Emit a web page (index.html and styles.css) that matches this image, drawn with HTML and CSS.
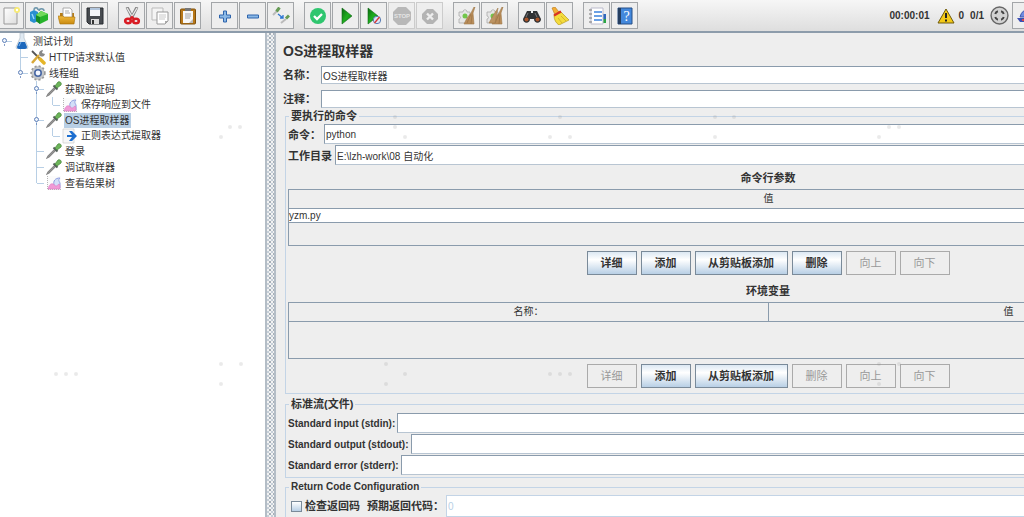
FILE: index.html
```html
<!DOCTYPE html>
<html lang="zh-CN">
<head>
<meta charset="utf-8">
<title>OS进程取样器</title>
<link rel="stylesheet" href="styles.css">
</head>
<body>
<svg class="defs" aria-hidden="true">
  <defs>
    <linearGradient id="g-green" x1="0" y1="0" x2="1" y2="1"><stop offset="0" stop-color="#0a6a10"/><stop offset=".5" stop-color="#1fae1f"/><stop offset="1" stop-color="#0b7a12"/></linearGradient>
    <linearGradient id="g-gold" x1="0" y1="0" x2="0" y2="1"><stop offset="0" stop-color="#f0b93c"/><stop offset="1" stop-color="#c98a10"/></linearGradient>
    <linearGradient id="g-page" x1="0" y1="0" x2="1" y2="1"><stop offset="0" stop-color="#fff"/><stop offset="1" stop-color="#ddd"/></linearGradient>
    <symbol id="dropper" viewBox="0 0 16 16">
      <path d="M1 15l1-2 7-7 1 1-7 7z" fill="#d5dad5" stroke="#858585" stroke-width="1.2"/>
      <path d="M7.500 4.500l4 4" stroke="#55605a" stroke-width="2"/>
      <path d="M9 5l3-4c2-1 4 1 3 3l-4 3z" fill="#6db55a" stroke="#4a8a3e" stroke-width=".8"/>
    </symbol>
    <symbol id="chart" viewBox="0 0 16 16">
      <path d="M1 1h14v14H1z" fill="#fbfbfb"/><path d="M1.500 1v13.500H15" fill="none" stroke="#b5b5b5" stroke-dasharray="1 1"/>
      <path d="M8 10c-1-4 1-7 6-7-2 2-1 3 0 5v5H8z" fill="#d3dff8" stroke="#8f9fe0" stroke-width="1"/>
      <path d="M2 14c1-4 3-6 5-5 2 0 1 2 3 2s2-2 3-2 1 3 1 5z" fill="#f09ad6" stroke="#dc78c2" stroke-width=".6"/>
    </symbol>
    <symbol id="broom" viewBox="0 0 18 18">
      <path d="M1 5h4c0-3 4-3 4 0h3v4c3 0 3 4 0 4v3H1v-4c2 0 2-3 0-3z" fill="#e6e6e6" stroke="#aaa" stroke-width=".8"/>
      <circle cx="7" cy="9" r="2.500" fill="#72c64a"/>
      <path d="M17 0l-2 6 1 11H6l3-6 4-5 3-6z" fill="#b98d5a" stroke="#a07a4c" stroke-width=".6"/>
      <path d="M13 7l-4 9m5-8l-1 9" stroke="#9a7246" stroke-width=".7"/>
    </symbol>
  </defs>
</svg>

<header class="toolbar">
  <div class="tool-group">
    <button class="tool" aria-label="新建"><svg viewBox="0 0 18 18"><path d="M2 1h13v16H2z" fill="url(#g-page)" stroke="#999"/><circle cx="15" cy="3" r="3" fill="#f7ea72"/><circle cx="15" cy="3" r="1.200" fill="#fff"/></svg></button>
    <button class="tool" aria-label="模板"><svg viewBox="0 0 18 18"><path d="M0 5l4-2 4 2v9l-4 2-4-2z" fill="#2a8fd0"/><path d="M4 3c0-3 4-3 4 0m1 1c0-3 5-3 5 0" fill="none" stroke="#6d96ab" stroke-width="1.500"/><path d="M6 8l5-4 7 3v6l-8 4-4-3z" fill="#27b32b"/><path d="M6 8l4 2v7l-4-3z" fill="#168a24"/><path d="M6 8l5-4 7 3-8 3z" fill="#72d95c"/><path d="M2 7l2 5" stroke="#9bdcff" stroke-width="1.300"/></svg></button>
    <button class="tool" aria-label="打开"><svg viewBox="0 0 18 18"><path d="M2 6h14v9H2z" fill="#b87d15"/><path d="M5 1h7l2 2v8H5z" fill="#fff" stroke="#999" stroke-width=".8"/><path d="M7 4h4M7 6h5" stroke="#aaa"/><path d="M0 9h5l1 1h11l-1 7H2z" fill="url(#g-gold)" stroke="#a8720e" stroke-width=".6"/></svg></button>
    <button class="tool" aria-label="保存"><svg viewBox="0 0 18 18"><path d="M1 1h16v16H3l-2-2z" fill="#474b50" stroke="#292c30"/><path d="M4 1h10v8H4z" fill="#f4f6f9"/><path d="M4 2h10" stroke="#6e94c0"/><path d="M5 12h8v5H5z" fill="#ddd"/><path d="M6 13h2v4H6z" fill="#333"/></svg></button>
  </div>
  <div class="tool-group">
    <button class="tool" aria-label="剪切"><svg viewBox="0 0 18 18"><path d="M4 0l6 12M14 0L8 12" stroke="#888" stroke-width="3"/><path d="M4 1l6 10M14 1L8 11" stroke="#eee" stroke-width="1.200"/><ellipse cx="5" cy="14" rx="2.800" ry="2.200" fill="none" stroke="#d91c24" stroke-width="2.600"/><ellipse cx="13" cy="14" rx="2.800" ry="2.200" fill="none" stroke="#d91c24" stroke-width="2.600"/><path d="M7 12l2-2 2 2" fill="none" stroke="#d91c24" stroke-width="2"/></svg></button>
    <button class="tool" aria-label="复制"><svg viewBox="0 0 18 18"><path d="M1 1h11v12H1z" fill="#f4f4f4" stroke="#bbb"/><path d="M6 5h11v9l-3 3H6z" fill="#fff" stroke="#999"/><path d="M8 8h7M8 10h7M8 12h6" stroke="#bbb" stroke-width=".8"/><path d="M14 17v-3h3z" fill="#aaa"/></svg></button>
    <button class="tool" aria-label="粘贴"><svg viewBox="0 0 18 18"><rect x="1.500" y="2" width="15" height="15" rx="1" fill="#b87819" stroke="#7e500c"/><path d="M4 4h10v12H4z" fill="#f8f8f8"/><path d="M6 1h6v3H6z" fill="#777"/><path d="M6 7h6M6 9h6M6 11h5" stroke="#999" stroke-width=".9"/><path d="M10 16l4-4v4z" fill="#bbb"/></svg></button>
  </div>
  <div class="tool-group">
    <button class="tool" aria-label="展开"><svg viewBox="0 0 18 18"><path d="M7.500 4h3v4h4v3h-4v4h-3v-4h-4V8h4z" fill="#8ab8e6" stroke="#2f65ad"/></svg></button>
    <button class="tool" aria-label="折叠"><svg viewBox="0 0 18 18"><path d="M3.500 8h11v3h-11z" fill="#8ab8e6" stroke="#2f65ad"/></svg></button>
    <button class="tool" aria-label="切换"><svg viewBox="0 0 18 18"><path d="M1 8l4-4M9 16l5-4" stroke="#bbb" stroke-width="2"/><path d="M4.500 4.500l3-4M14 11.500l3-3" stroke="#679b56" stroke-width="3"/><path d="M6 7l5 4m0-3v3H8" fill="none" stroke="#2c75d2" stroke-width="1.300"/></svg></button>
  </div>
  <div class="tool-group">
    <button class="tool" aria-label="已启用"><svg viewBox="0 0 18 18"><circle cx="9" cy="9" r="8" fill="#2fc66f"/><path d="M5 9l3 3 5-5" fill="none" stroke="#fff" stroke-width="2.300"/></svg></button>
    <button class="tool" aria-label="启动"><svg viewBox="0 0 18 18"><path d="M5 1l10 8-10 8z" fill="url(#g-green)" stroke="#12691a" stroke-width=".6"/></svg></button>
    <button class="tool" aria-label="不停顿启动"><svg viewBox="0 0 18 18"><path d="M3 1l10 8-10 8z" fill="url(#g-green)" stroke="#12691a" stroke-width=".6"/><circle cx="12" cy="13" r="3.700" fill="#dbe7f6" stroke="#5b7eb4"/><path d="M9.500 16l5-6" stroke="#dd3434" stroke-width="1.300"/></svg></button>
    <button class="tool" disabled aria-label="停止"><svg viewBox="0 0 18 18"><path d="M5 0h8l5 5v8l-5 5H5l-5-5V5z" fill="#b8b8b8"/><text class="stop-text" x="9" y="11" text-anchor="middle">STOP</text></svg></button>
    <button class="tool" disabled aria-label="关闭"><svg viewBox="0 0 18 18"><path d="M6 2h6l5 5v5l-5 5H6l-5-5V7z" fill="#b4b4b4"/><path d="M6 6.500l6 6M12 6.500l-6 6" stroke="#eee" stroke-width="2.400"/></svg></button>
  </div>
  <div class="tool-group">
    <button class="tool" aria-label="清除"><svg><use href="#broom"/></svg></button>
    <button class="tool" aria-label="清除全部"><svg viewBox="0 0 18 18"><use href="#broom" width="18" height="18"/><path d="M12 1L8 7l-5 9h6z" fill="#bd9463" stroke="#a07a4c" stroke-width=".6"/></svg></button>
  </div>
  <div class="tool-group">
    <button class="tool" aria-label="查找"><svg viewBox="0 0 18 18"><path d="M4 4h4v2h2V4h4l4 8c0 5-7 5-7 0H7c0 5-7 5-7 0z" fill="#303234"/><circle cx="3.500" cy="12.500" r="2" fill="#a9552b"/><circle cx="14.500" cy="12.500" r="2" fill="#a9552b"/><path d="M5 6L3 10M12 6l2 4" stroke="#777"/></svg></button>
    <button class="tool" aria-label="重置查找"><svg viewBox="0 0 18 18"><path d="M1 1l3-1 4 5-4 3z" fill="#f3ad35" stroke="#b97718" stroke-width=".6"/><path d="M3 8l6-4 9 9-10 5c-3-2-5-5-5-10z" fill="#f4dc3d" stroke="#b79b1d" stroke-width=".7"/><path d="M3 8.500l7-4" stroke="#d93224" stroke-width="2.200"/><path d="M7 11l4 5M10 9l5 5" stroke="#d6b72b"/></svg></button>
  </div>
  <div class="tool-group">
    <button class="tool" aria-label="函数助手"><svg viewBox="0 0 18 18"><path d="M12 11h6v5h-6z" fill="#2aa544"/><path d="M14 7h4v5h-4z" fill="#2e69bd"/><path d="M3 1h12v16H3z" fill="#fff" stroke="#bbc"/><path d="M6 5h8M6 9h8M6 13h8" stroke="#3c82dd" stroke-width="1.700"/><path d="M1 3h3M1 7h3M1 11h3M1 15h3" stroke="#777"/></svg></button>
    <button class="tool" aria-label="帮助"><svg viewBox="0 0 18 18"><path d="M2 1h14v16H2z" fill="#4388dc" stroke="#264f86"/><path d="M2 1h3v16H2z" fill="#263f61"/><text class="help-text" x="10.500" y="14" text-anchor="middle">?</text></svg></button>
  </div>
  <div class="status">
    <span>00:00:01</span>
    <svg class="warn" viewBox="0 0 18 16"><path d="M9 1l8 14H1z" fill="#f4ca18" stroke="#6e5a0c" stroke-linejoin="round"/><path d="M9 5v5M9 11.500v2" stroke="#222" stroke-width="2"/></svg>
    <span>0</span>
    <span class="threads">0/1</span>
    <svg class="round" viewBox="0 0 18 18"><circle cx="9" cy="9" r="8" fill="#d2d2d2" stroke="#666" stroke-width="1.300"/><path d="M5 7.500q.5-2 2.500-2.500M10.500 5q2 .5 2.500 2.500M13 10.500q-.5 2-2.500 2.500M7.500 13q-2-.5-2.500-2.500" fill="none" stroke="#444" stroke-width="1.900"/></svg>
    <button class="tool lang" aria-label="语言"><svg viewBox="0 0 18 18"><path d="M3 10q2-8 9-7l4 7z" fill="#6f8be0" stroke="#3e57b0"/><path d="M0 11h15v4H3z" fill="#3c4fb4"/><path d="M5 12h10v2H5z" fill="#d94848"/></svg></button>
  </div>
</header>

<main class="workspace">
  <nav class="tree" aria-label="测试计划">
    <ul>
      <li class="open root">
        <div class="node"><svg viewBox="0 0 16 16"><path d="M6 0h4v5l4 9q0 2-2 2H4q-2 0-2-2l4-9z" fill="#dfe9f2" stroke="#b5c0ca" stroke-width=".7"/><path d="M5 9h6l2 5q0 2-2 2H5q-2 0-2-2z" fill="#1c68bd"/><path d="M7 9l-2 4" stroke="#7fb7f0"/></svg><span>测试计划</span></div>
        <ul>
          <li><div class="node"><svg viewBox="0 0 16 16"><path d="M2 2l8 8" stroke="#555" stroke-width="1.800"/><path d="M10 10l4 4" stroke="#e5b528" stroke-width="3.500" stroke-linecap="round"/><path d="M2 14l7-8" stroke="#d9a93a" stroke-width="2.500"/><path d="M9 5c0-3 2-4 4-4l-1 3 3 1c-1 3-3 3-5 2z" fill="#888"/></svg><span>HTTP请求默认值</span></div></li>
          <li class="open">
            <div class="node"><svg viewBox="0 0 16 16"><circle cx="8" cy="8" r="6.700" fill="#bbb" stroke="#999" stroke-width="2" stroke-dasharray="2 2"/><circle cx="8" cy="8" r="6" fill="#c4c8cc"/><circle cx="8" cy="8" r="3.200" fill="#f5f8ff" stroke="#4867a4" stroke-width="1.600"/></svg><span>线程组</span></div>
            <ul>
              <li class="open"><div class="node"><svg><use href="#dropper"/></svg><span>获取验证码</span></div>
                <ul class="leaf"><li><div class="node"><svg><use href="#chart"/></svg><span>保存响应到文件</span></div></li></ul></li>
              <li class="open"><div class="node"><svg><use href="#dropper"/></svg><span class="selected">OS进程取样器</span></div>
                <ul class="leaf"><li><div class="node"><svg viewBox="0 0 16 16"><path d="M1 1h11v14H1z" fill="#f7f7f7" stroke="#ccc" stroke-width=".7"/><path d="M5 7h5L7 3h3l5 5-5 5H7l3-4H5z" fill="#1d6fd0"/></svg><span>正则表达式提取器</span></div></li></ul></li>
              <li><div class="node"><svg><use href="#dropper"/></svg><span>登录</span></div></li>
              <li><div class="node"><svg><use href="#dropper"/></svg><span>调试取样器</span></div></li>
              <li><div class="node"><svg><use href="#chart"/></svg><span>查看结果树</span></div></li>
            </ul>
          </li>
        </ul>
      </li>
    </ul>
  </nav>
  <div class="divider"></div>
  <section class="editor">
    <form class="form">
      <h1>OS进程取样器</h1>
      <div class="named-fields">
        <div class="field named"><label for="name">名称：</label><input id="name" type="text" value="OS进程取样器"></div>
        <div class="field named"><label for="comment">注释：</label><input id="comment" type="text"></div>
      </div>

      <fieldset class="command">
        <legend>要执行的命令</legend>
        <div class="field tall"><label class="wide" for="cmd">命令：</label><input id="cmd" type="text" value="python"></div>
        <div class="field tall"><label for="dir">工作目录</label><input id="dir" type="text" value="E:\lzh-work\08 自动化"></div>

        <h2 class="args-title">命令行参数</h2>
        <div class="table-box">
          <table><thead><tr><th>值</th></tr></thead><tbody><tr><td>yzm.py</td></tr></tbody></table>
        </div>
        <div class="actions">
          <button type="button">详细</button><button type="button">添加</button><button type="button">从剪贴板添加</button><button type="button">删除</button><button type="button" disabled>向上</button><button type="button" disabled>向下</button>
        </div>

        <h2 class="env-title">环境变量</h2>
        <div class="table-box">
          <table class="env"><thead><tr><th>名称：</th><th>值</th></tr></thead></table>
        </div>
        <div class="actions last">
          <button type="button" disabled>详细</button><button type="button">添加</button><button type="button">从剪贴板添加</button><button type="button" disabled>删除</button><button type="button" disabled>向上</button><button type="button" disabled>向下</button>
        </div>
      </fieldset>

      <fieldset class="streams">
        <legend>标准流(文件)</legend>
        <div class="field tall"><label for="stdin">Standard input (stdin):</label><input id="stdin" type="text"></div>
        <div class="field tall"><label for="stdout">Standard output (stdout):</label><input id="stdout" type="text"></div>
        <div class="field tall"><label for="stderr">Standard error (stderr):</label><input id="stderr" type="text"></div>
      </fieldset>

      <fieldset class="return-code">
        <legend>Return Code Configuration</legend>
        <div class="field check-row">
          <input id="check" type="checkbox"><label for="check">检查返回码</label>
          <label class="expected" for="code">预期返回代码：</label><input id="code" type="text" value="0" disabled>
        </div>
      </fieldset>
    </form>
  </section>
</main>

<svg class="dots" aria-hidden="true">
  <g fill="#888" fill-opacity=".18">
    <circle cx="230" cy="127" r="2"/><circle cx="240" cy="127" r="2"/><circle cx="221" cy="137" r="2"/>
    <circle cx="395" cy="117" r="2"/><circle cx="395" cy="127" r="2"/><circle cx="405" cy="137" r="2"/>
    <circle cx="560" cy="117" r="2"/><circle cx="550" cy="137" r="2"/><circle cx="570" cy="137" r="2"/>
    <circle cx="715" cy="117" r="2"/><circle cx="734" cy="117" r="2"/><circle cx="715" cy="137" r="2"/>
    <circle cx="889" cy="127" r="2"/><circle cx="899" cy="127" r="2"/><circle cx="879" cy="137" r="2"/>
    <circle cx="56" cy="374" r="2"/><circle cx="66" cy="374" r="2"/><circle cx="76" cy="374" r="2"/>
    <circle cx="221" cy="364" r="2"/><circle cx="241" cy="364" r="2"/><circle cx="221" cy="384" r="2"/>
    <circle cx="386" cy="364" r="2"/><circle cx="405" cy="374" r="2"/><circle cx="386" cy="384" r="2"/>
    <circle cx="550" cy="374" r="2"/><circle cx="560" cy="374" r="2"/><circle cx="570" cy="374" r="2"/>
    <circle cx="879" cy="364" r="2"/><circle cx="899" cy="364" r="2"/><circle cx="879" cy="384" r="2"/>
  </g>
</svg>
</body>
</html>
```

FILE: styles.css
```css
*, *::before, *::after { box-sizing: border-box; }

body {
  margin: 0;
  height: 100vh;
  display: flex;
  flex-direction: column;
  overflow: hidden;
  background: #eee;
  color: #333;
  font: 10px/14px "Liberation Sans", "Noto Sans CJK SC", sans-serif;
}

button, input { font: inherit; color: inherit; }
svg { display: block; flex: none; }
.defs { position: absolute; width: 0; height: 0; }

/* toolbar */
.toolbar {
  display: flex;
  align-items: flex-start;
  gap: 10px;
  height: 33px;
  flex: none;
  padding-top: 2px;
  background: linear-gradient(#f6f6f6, #dedede);
  border-bottom: 2px solid #8d9cab;
}
.tool-group { display: flex; gap: 1px; flex: none; }
.tool-group:first-child { margin-left: -3px; }
.tool {
  width: 27px;
  height: 27px;
  padding: 0;
  display: flex;
  align-items: center;
  justify-content: center;
  flex: none;
  border: 1px solid #a3a6a9;
  background: #eee;
}
.tool:disabled { border-color: #ccc; }
.tool svg { width: 18px; height: 18px; }
.stop-text { font: bold 6px "Liberation Sans", sans-serif; fill: #e4e4e4; }
.help-text { font: 14px "Liberation Serif", serif; fill: #fff; }
.status {
  margin-left: auto;
  margin-right: -15px;
  display: flex;
  align-items: center;
  font-weight: bold;
  flex: none;
}
.warn { width: 18px; height: 16px; margin: 0 4px 0 7px; }
.threads { margin: 0 6px; }
.round { width: 19px; height: 19px; margin-right: 3px; }

/* layout */
.workspace { flex: 1; display: flex; min-height: 0; }
.tree {
  width: 267px;
  flex: none;
  background: #fff;
  border-right: 2px solid #b4bdc6;
  overflow: hidden;
}
.divider {
  width: 7px;
  flex: none;
  background:
    radial-gradient(circle at 1px 1px, #a6afb8 0 1px, transparent 1px) 2px 0 / 4px 4px,
    radial-gradient(circle at 1px 1px, #c6cfd8 0 1px, transparent 1px) 4px 2px / 4px 4px,
    #f2f2f2;
}
.editor {
  flex: 1;
  min-width: 0;
  overflow: hidden;
  border-left: 2px solid #b4bdc6;
}

/* tree */
.tree ul { list-style: none; margin: 0; padding: 0 0 0 16px; }
.tree > ul { padding: 0 0 0 4px; }
.tree li { position: relative; }
.node {
  height: 16px;
  display: flex;
  align-items: center;
  gap: 2px;
  padding-left: 10px;
  white-space: nowrap;
}
.leaf .node { height: 15px; }
.node svg { width: 16px; height: 16px; }
.node span { padding: 0 2px 0 1px; line-height: 15px; }
.node .selected { background: #b8cfe5; }
.tree li::before {
  content: "";
  position: absolute;
  left: 0;
  top: 0;
  height: 100%;
  border-left: 1px solid #b8cfe5;
}
.tree li:last-child::before { height: 8px; }
.tree .root::before { display: none; }
.node::before {
  content: "";
  position: absolute;
  left: 1px;
  top: 8px;
  width: 7px;
  border-top: 1px solid #b8cfe5;
}
.open > .node::after {
  content: "";
  position: absolute;
  left: -2px;
  top: 5px;
  width: 5px;
  height: 5px;
  border: 1px solid #5f80b8;
  border-radius: 50%;
  background: #eef4fb;
  box-shadow: 0 4px 0 -2px #5f80b8, 0 5px 0 -2px #5f80b8;
}

/* form */
.form { min-width: 984px; padding: 8px 7px 0; }
h1 { margin: 0 0 5px; font-size: 14px; line-height: 20px; }
h2 { margin: 0; font-size: 11px; line-height: 16px; text-align: center; }
.field { display: flex; align-items: center; }
.field label { font-size: 11px; font-weight: bold; white-space: nowrap; }
.field input[type="text"] {
  flex: 1;
  min-width: 0;
  height: 18px;
  padding: 0 0 0 1px;
  border: 1px solid #8a9bac;
  border-right-color: #b8cfe5;
  border-bottom-color: #b8c5d2;
  border-radius: 0;
  background: #fff;
}
.named-fields { display: flex; flex-direction: column; gap: 6px; }
.named label { width: 38px; }
.field.tall input { height: 20px; margin-bottom: 1px; }
.tall label { margin-right: 3px; }
.tall .wide { width: 33px; }

fieldset {
  margin: 0 2px;
  padding: 0 2px;
  border: 1px solid #c3d4e6;
  min-width: 0;
}
legend {
  margin-left: 1px;
  padding: 0 2px;
  font-size: 11px;
  font-weight: bold;
  line-height: 16px;
}
.args-title { margin: 4px 0 3px; }
.env-title { margin-bottom: 3px; }
.table-box {
  border: 1px solid #8a9bac;
  border-right: 0;
  height: 57px;
}
table { width: 100%; border-collapse: collapse; table-layout: fixed; }
th { height: 18px; padding: 0; font-weight: normal; border-bottom: 1px solid #8a9bac; }
th + th { border-left: 1px solid #8a9bac; }
td { height: 14px; padding: 0; line-height: 13px; background: #fff; border-bottom: 1px solid #8a9bac; }
.actions { display: flex; justify-content: center; gap: 4px; padding: 5px 0 8px; }
.actions.last { padding-bottom: 5px; }
.actions button {
  width: 50px;
  height: 24px;
  padding: 0;
  border: 1px solid #7a8a99;
  background: linear-gradient(#dce8f3, #fff 35%, #b8cfe5);
  font-size: 11px;
  font-weight: bold;
  white-space: nowrap;
}
.actions button:nth-child(3) { width: 93px; }
.actions button:disabled { color: #999; border-color: #aaa; background: #eee; font-weight: normal; }

.streams { margin-top: 2px; padding-bottom: 1px; }
.streams legend { padding-bottom: 1px; }
.streams .field label, .return-code legend { font-size: 10px; }
.streams .field label { margin-right: 2px; }
.return-code { margin-top: 1px; }

.check-row input[type="checkbox"] {
  appearance: none;
  width: 11px;
  height: 11px;
  margin: 0 3px;
  border: 1px solid #7a8a99;
  background: linear-gradient(#fff, #b8cfe5);
}
.check-row .expected { margin: 0 2px 0 7px; }
.field.check-row #code { height: 22px; color: #b8cfe5; border-color: #c3d4e6; }

/* faint dot marks over the window */
.dots { position: absolute; inset: 0; width: 100%; height: 100%; pointer-events: none; }
```
